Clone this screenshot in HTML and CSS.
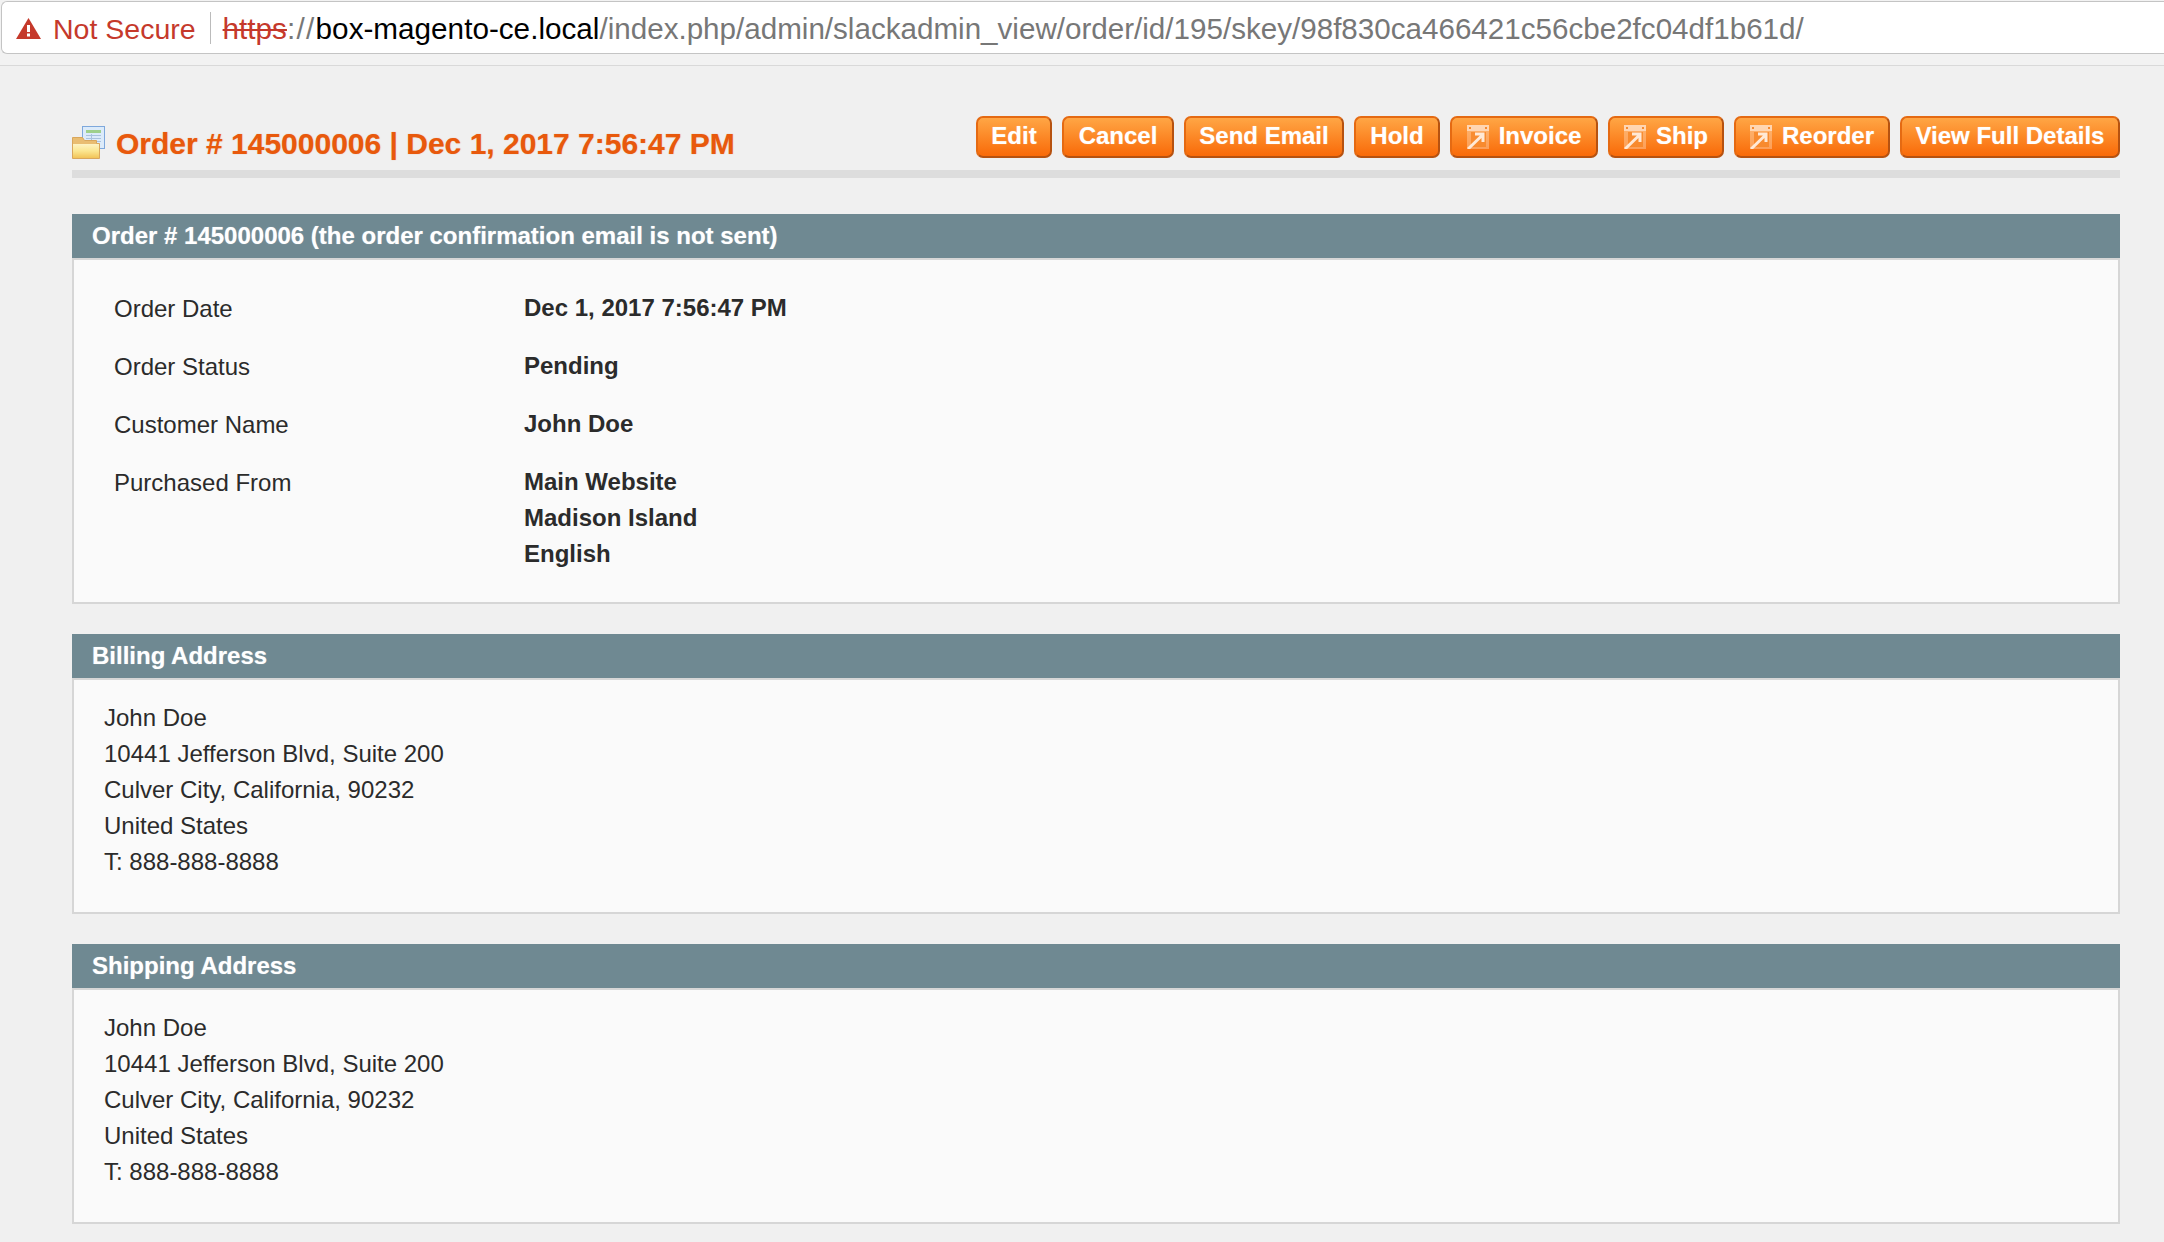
FILE: index.html
```html
<!DOCTYPE html>
<html lang="en">
<head>
<meta charset="utf-8">
<title>Order # 145000006</title>
<link rel="stylesheet" href="styles.css">
</head>
<body>
<svg class="defs" width="0" height="0">
  <defs>
    <symbol id="go" viewBox="0 0 22 24">
      <rect x="0" y="0" width="22" height="24" fill="#ffd2ac" opacity="0.45"/>
      <rect x="0" y="0" width="22" height="6" fill="#ffe2c9" opacity="0.75"/>
      <rect x="2" y="2" width="2" height="2" fill="#f58a30"/>
      <rect x="18" y="2" width="2" height="2" fill="#f58a30"/>
      <rect x="4" y="7" width="15" height="15" fill="#f5821f" opacity="0.75"/>
      <path d="M1 24 L15 10.500 M8 9 H16 V17" fill="none" stroke="#ffe9d6" stroke-width="3"/>
    </symbol>
  </defs>
</svg>
<div class="chrome">
  <div class="urlbar">
    <svg class="warn" width="25" height="21" viewBox="0 0 25 21"><path d="M12.500 0 L25 21 L0 21 Z" fill="#c5392b"/><rect x="11" y="7" width="3" height="7" fill="#fff"/><rect x="11" y="15.500" width="3" height="3" fill="#fff"/></svg>
    <span class="notsecure">Not Secure</span>
    <span class="sep"></span>
    <span class="url"><span class="https">https</span><span class="dim scheme">://</span><span class="host">box-magento-ce.local</span><span class="dim path">/index.php/admin/slackadmin_view/order/id/195/skey/98f830ca466421c56cbe2fc04df1b61d/</span></span>
  </div>
</div>
<main class="page">
  <header class="head">
    <div class="title">
      <svg class="order-icon" width="33" height="33" viewBox="0 0 33 33">
        <defs>
          <linearGradient id="folder" x1="0" y1="0" x2="0" y2="1"><stop offset="0" stop-color="#fdf3c4"/><stop offset="0.5" stop-color="#fbe690"/><stop offset="1" stop-color="#f2c458"/></linearGradient>
        </defs>
        <rect x="10.500" y="0.500" width="22" height="22" fill="#dcebfa" stroke="#7ea8dc"/>
        <rect x="14" y="4" width="15" height="3" fill="#9fd08c"/>
        <path d="M14 9.500h15M14 12.500h15M14 15.500h15M19.500 8v10" stroke="#a9c2de" fill="none"/>
        <path d="M0.500 11.500h10l2 3h12v3h3v15h-27z" fill="#e9bd72" stroke="#d9a75c"/>
        <path d="M1 18h26v14h-26z" fill="url(#folder)"/>
      </svg>
      <h1>Order # 145000006 | Dec 1, 2017 7:56:47 PM</h1>
    </div>
    <div class="actions">
      <button class="btn w-edit">Edit</button>
      <button class="btn w-cancel">Cancel</button>
      <button class="btn w-send">Send Email</button>
      <button class="btn w-hold">Hold</button>
      <button class="btn w-invoice"><svg class="go" width="22" height="24"><use href="#go"/></svg>Invoice</button>
      <button class="btn w-ship"><svg class="go" width="22" height="24"><use href="#go"/></svg>Ship</button>
      <button class="btn w-reorder"><svg class="go" width="22" height="24"><use href="#go"/></svg>Reorder</button>
      <button class="btn w-view">View Full Details</button>
    </div>
  </header>

  <section class="panel">
    <h2>Order # 145000006 (the order confirmation email is not sent)</h2>
    <div class="panel-body info">
      <div class="label">Order Date</div><div class="value">Dec 1, 2017 7:56:47 PM</div>
      <div class="label">Order Status</div><div class="value">Pending</div>
      <div class="label">Customer Name</div><div class="value">John Doe</div>
      <div class="label">Purchased From</div><div class="value">Main Website<br>Madison Island<br>English</div>
    </div>
  </section>

  <section class="panel">
    <h2>Billing Address</h2>
    <address class="panel-body addr">John Doe<br>10441 Jefferson Blvd, Suite 200<br>Culver City, California, 90232<br>United States<br>T: 888-888-8888</address>
  </section>

  <section class="panel">
    <h2>Shipping Address</h2>
    <address class="panel-body addr">John Doe<br>10441 Jefferson Blvd, Suite 200<br>Culver City, California, 90232<br>United States<br>T: 888-888-8888</address>
  </section>
</main>
</body>
</html>
```
FILE: styles.css
```css
* { box-sizing: border-box; }
html, body { margin: 0; padding: 0; }
body {
  width: 2164px;
  height: 1242px;
  overflow: hidden;
  background: #f0f0f0;
  font-family: "Liberation Sans", Arial, sans-serif;
  color: #2b2b2b;
}
.defs { display: block; }
.chrome {
  height: 66px;
  padding: 1px 0 0 1px;
  background: #f2f2f2;
  border-bottom: 1px solid #d9d9d9;
}
.urlbar {
  height: 53px;
  background: #fff;
  border: 1px solid #c4c4c4;
  border-right: 0;
  border-radius: 6px 0 0 6px;
  display: flex;
  align-items: center;
  padding-left: 14px;
}
.warn { flex: none; margin: 1px 12px 0 0; }
.notsecure { font-size: 28.500px; padding-top: 3px; color: #c5392b; white-space: nowrap; }
.sep { width: 1px; height: 32px; background: #bbb; margin: 0 12px 0 14px; flex: none; }
.url { font-size: 29.700px; padding-top: 3px; white-space: nowrap; color: #777; }
.https { color: #c5392b; text-decoration: line-through; }
.dim { color: #777; }
.scheme { letter-spacing: 1.300px; }
.path { font-size: 29.600px; }
.host { color: #000; }

.page { padding: 50px 44px 0 72px; }
.head {
  display: flex;
  justify-content: space-between;
  align-items: flex-start;
  height: 62px;
  border-bottom: 8px solid #ddd;
}
.title { display: flex; align-items: flex-start; gap: 11px; }
.order-icon { flex: none; margin-top: 10px; }
h1 {
  margin: 9px 0 0;
  font-size: 30px;
  line-height: 38px;
  font-weight: bold;
  color: #e8590c;
  text-shadow: 0 0 1px rgba(232, 89, 12, 0.5);
  white-space: nowrap;
}
.actions { display: flex; gap: 10px; }
.btn {
  height: 42px;
  padding: 0 0 3px;
  display: flex;
  align-items: center;
  justify-content: center;
  gap: 10px;
  font: bold 24px/1 "Liberation Sans", Arial, sans-serif;
  color: #fff;
  text-shadow: 0 0 1px rgba(255, 255, 255, 0.5);
  background: linear-gradient(#ffa645, #f96a08);
  border: 2px solid #e56a12;
  border-right-color: #b65210;
  border-bottom-color: #b65210;
  border-radius: 7px;
  white-space: nowrap;
}
.w-edit { width: 76px; }
.w-cancel { width: 112px; }
.w-send { width: 160px; }
.w-hold { width: 86px; }
.w-invoice { width: 148px; }
.w-ship { width: 116px; }
.w-reorder { width: 156px; }
.w-view { width: 220px; }
.go { flex: none; margin-top: 3px; }

.panel { margin-top: 30px; }
.head + .panel { margin-top: 36px; }
h2 {
  margin: 0;
  height: 44px;
  padding-left: 20px;
  background: #6f8992;
  color: #fff;
  font-size: 24px;
  line-height: 43px;
  font-weight: bold;
  text-shadow: 0 0 1px rgba(255, 255, 255, 0.5);
  white-space: nowrap;
}
.panel-body {
  background: #fafafa;
  border: 2px solid #d6d6d6;
  font-size: 24px;
  color: #2b2b2b;
}
.info {
  height: 346px;
  display: grid;
  grid-template-columns: 410px 1fr;
  grid-auto-rows: min-content;
  row-gap: 21px;
  padding: 30px 0 0 40px;
}
.label { line-height: 36px; padding-top: 1px; }
.value { font-weight: bold; line-height: 36px; }
.addr {
  font-style: normal;
  height: 236px;
  padding: 20px 0 0 30px;
  line-height: 36px;
}
```
